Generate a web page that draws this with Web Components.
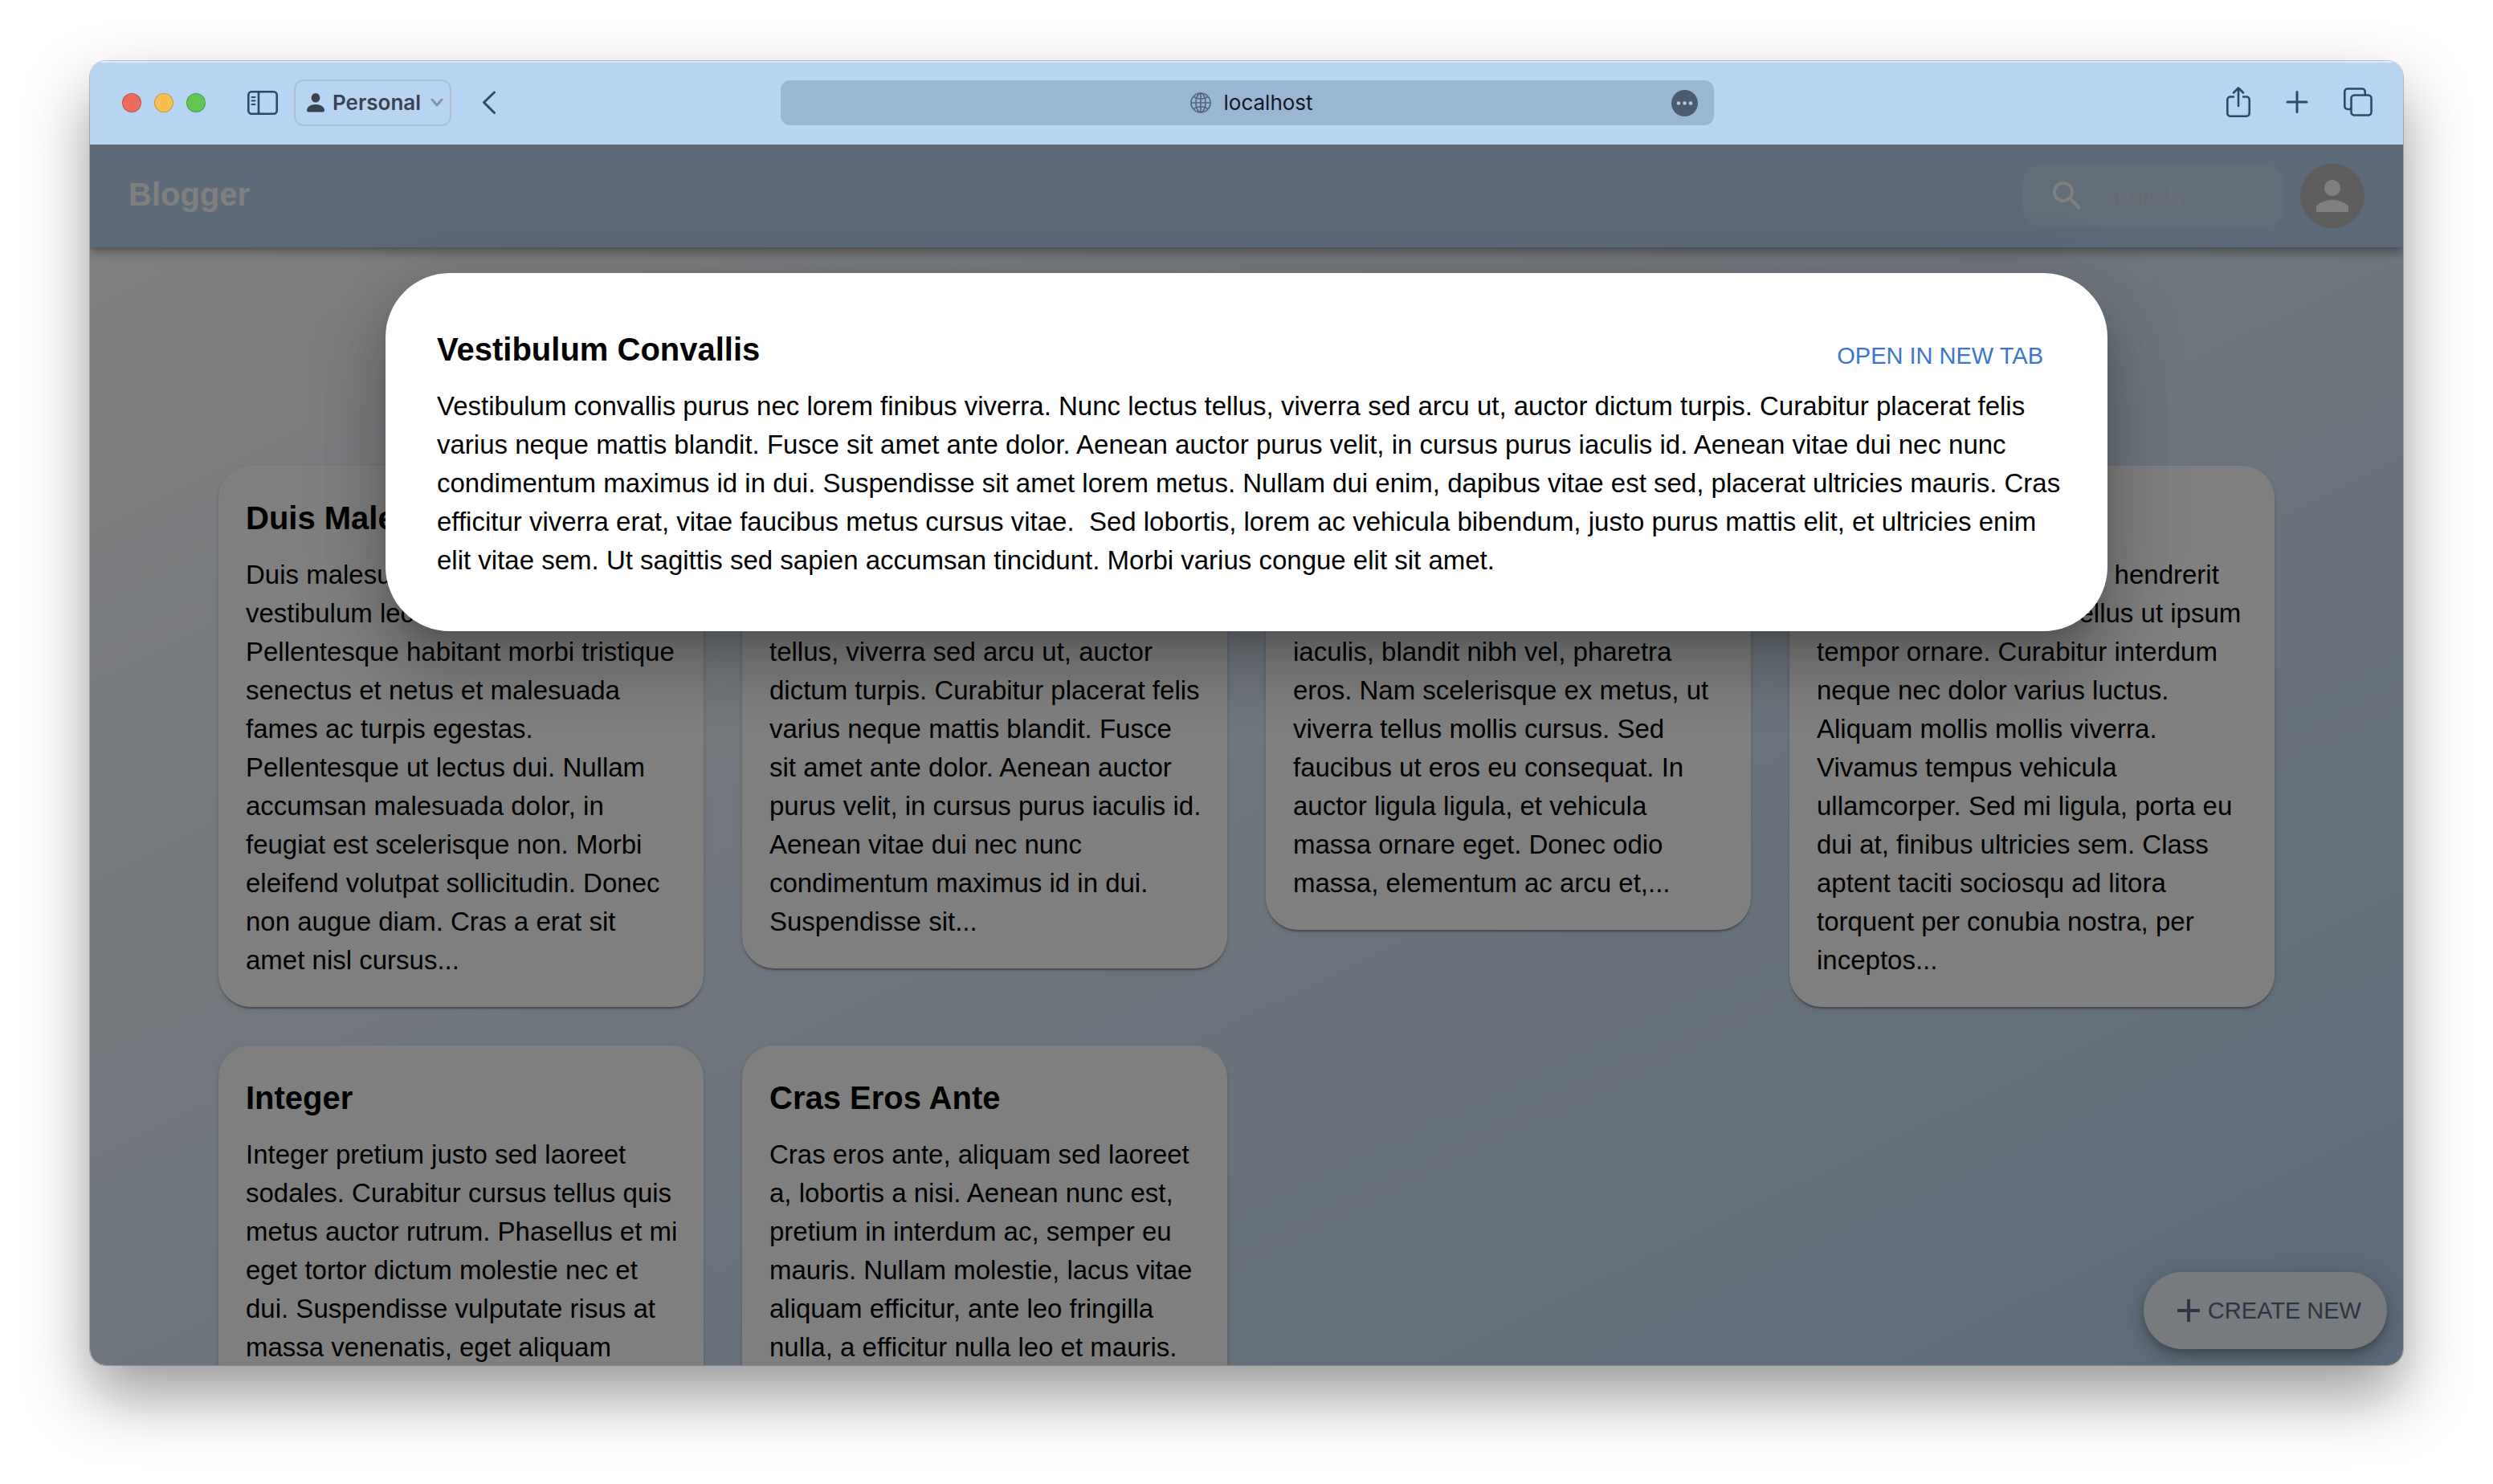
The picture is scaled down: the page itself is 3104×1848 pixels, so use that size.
<!DOCTYPE html>
<html lang="en">
<head>
<meta charset="utf-8">
<title>Blogger</title>
<style>
  body { margin: 0; background: #fff; font-family: "Liberation Sans", Arial, sans-serif; font-size: 33px; line-height: 48px; color: #000; }
</style>
</head>
<body>
<browser-window>
  <browser-toolbar slot="toolbar"></browser-toolbar>
  <blog-page>
    <blog-appbar slot="appbar"></blog-appbar>
    <post-card heading="Duis Malesuada">Duis malesuada lorem id tellus vestibulum lectus viverra sed. Pellentesque habitant morbi tristique senectus et netus et malesuada fames ac turpis egestas. Pellentesque ut lectus dui. Nullam accumsan malesuada dolor, in feugiat est scelerisque non. Morbi eleifend volutpat sollicitudin. Donec non augue diam. Cras a erat sit amet nisl cursus...</post-card>
    <post-card heading="Vestibulum Convallis">Vestibulum convallis purus nec lorem finibus viverra. Nunc lectus tellus, viverra sed arcu ut, auctor dictum turpis. Curabitur placerat felis varius neque mattis blandit. Fusce sit amet ante dolor. Aenean auctor purus velit, in cursus purus iaculis id. Aenean vitae dui nec nunc condimentum maximus id in dui. Suspendisse sit...</post-card>
    <post-card heading="Aenean Nec Felis">Aenean nec felis quis lorem ac vulputate porta. Nulla ut mauris iaculis, blandit nibh vel, pharetra eros. Nam scelerisque ex metus, ut viverra tellus mollis cursus. Sed faucibus ut eros eu consequat. In auctor ligula ligula, et vehicula massa ornare eget. Donec odio massa, elementum ac arcu et,...</post-card>
    <post-card heading="Suspendisse">Suspendisse posuere, in hendrerit viverra a sapien. Phasellus ut ipsum tempor ornare. Curabitur interdum neque nec dolor varius luctus. Aliquam mollis mollis viverra. Vivamus tempus vehicula ullamcorper. Sed mi ligula, porta eu dui at, finibus ultricies sem. Class aptent taciti sociosqu ad litora torquent per conubia nostra, per inceptos...</post-card>
    <post-card heading="Integer">Integer pretium justo sed laoreet sodales. Curabitur cursus tellus quis metus auctor rutrum. Phasellus et mi eget tortor dictum molestie nec et dui. Suspendisse vulputate risus at massa venenatis, eget aliquam</post-card>
    <post-card heading="Cras Eros Ante">Cras eros ante, aliquam sed laoreet a, lobortis a nisi. Aenean nunc est, pretium in interdum ac, semper eu mauris. Nullam molestie, lacus vitae aliquam efficitur, ante leo fringilla nulla, a efficitur nulla leo et mauris.</post-card>
    <create-button slot="fab">CREATE NEW</create-button>
    <post-dialog slot="dialog" heading="Vestibulum Convallis">Vestibulum convallis purus nec lorem finibus viverra. Nunc lectus tellus, viverra sed arcu ut, auctor dictum turpis. Curabitur placerat felis varius neque mattis blandit. Fusce sit amet ante dolor. Aenean auctor purus velit, in cursus purus iaculis id. Aenean vitae dui nec nunc condimentum maximus id in dui. Suspendisse sit amet lorem metus. Nullam dui enim, dapibus vitae est sed, placerat ultricies mauris. Cras efficitur viverra erat, vitae faucibus metus cursus vitae.&nbsp; Sed lobortis, lorem ac vehicula bibendum, justo purus mattis elit, et ultricies enim elit vitae sem. Ut sagittis sed sapien accumsan tincidunt. Morbi varius congue elit sit amet.</post-dialog>
  </blog-page>
</browser-window>

<script>
const define = (name, html) => customElements.define(name, class extends HTMLElement {
  connectedCallback() {
    if (this.shadowRoot) return;
    const t = document.createElement('template');
    t.innerHTML = '<style>*{box-sizing:border-box}button,input{font:inherit;color:inherit;border:0;padding:0;margin:0;background:none;outline:0}svg{display:block;flex:none}</style>' + html;
    this.attachShadow({ mode: 'open' }).append(t.content.cloneNode(true));
    const h = this.shadowRoot.querySelector('[data-heading]');
    if (h) h.textContent = this.getAttribute('heading');
  }
});

define('browser-window', `
<style>
  :host { display: block; box-sizing: border-box; height: 100vh; padding: 76px 112px 148px; overflow: hidden; }
  .frame { display: flex; flex-direction: column; height: 100%; border-radius: 20px; overflow: hidden;
    box-shadow: 0 0 0 1px rgba(0,0,0,.22), 0 38px 80px rgba(0,0,0,.4); }
  .view { flex: 1; min-height: 0; display: flex; flex-direction: column; }
</style>
<div class="frame"><slot name="toolbar"></slot><div class="view"><slot></slot></div></div>`);

define('browser-toolbar', `
<style>
  :host { display: grid; grid-template-columns: 1fr 1162px 1fr; align-items: center; height: 104px; flex: none; box-sizing: border-box;
    padding: 0 38px 0 40px; background: #b8d4f3; box-shadow: inset 0 2px 0 #dcebfb; color: #2b4a69;
    font-family: Inter, "Liberation Sans", sans-serif; font-size: 26px; line-height: 32px; }
  .left, .right, .lights { display: flex; align-items: center; }
  .lights { gap: 16px; margin-right: 52px; }
  .light { width: 24px; height: 24px; border-radius: 50%; border: 1px solid rgba(0,0,0,.2); }
  .profile { display: flex; align-items: center; height: 58px; width: 196px; padding: 0 8px 0 14px; margin: 0 38px 0 20px; border: 2px solid #b0bfd0; border-radius: 12px;
    color: #38434f; font-weight: 600; }
  .profile span { flex: 1; text-align: left; padding-left: 10px; }
  .address { display: flex; align-items: center; height: 56px; padding: 0 20px 0 64px; border-radius: 12px; background: #9ab6d5; }
  .place { flex: 1; display: flex; align-items: center; justify-content: center; gap: 16px; }
  .place input { width: 112px; height: 32px; color: #12181f; }
  .right { justify-content: flex-end; gap: 44px; }
  button { display: flex; }
</style>
<div class="left">
  <div class="lights">
    <button class="light" aria-label="Close" style="background:#ed6a5e"></button>
    <button class="light" aria-label="Minimise" style="background:#f5bf4f"></button>
    <button class="light" aria-label="Zoom" style="background:#61c554"></button>
  </div>
  <button aria-label="Sidebar"><svg width="38" height="30" viewBox="0 0 38 30" fill="none" stroke="currentColor" stroke-width="2.6"><rect x="1.3" y="1.3" width="35.4" height="27.4" rx="4"/><path d="M14 1v28"/><path d="M5.500 8h4M5.500 12.500h4M5.500 17h4" stroke-width="1.800" stroke-linecap="round"/></svg></button>
  <button class="profile"><svg width="22" height="24" viewBox="0 0 22 24" fill="currentColor"><ellipse cx="11" cy="5.800" rx="5.400" ry="5.800"/><path d="M0 21.500C0 17 5 14 11 14s11 3 11 7.500c0 1.200-.8 2-2 2H2c-1.200 0-2-.8-2-2z"/></svg><span>Personal</span><svg width="16" height="12" viewBox="0 0 16 12" fill="none" stroke="#8f9096" stroke-width="3" stroke-linecap="round" stroke-linejoin="round"><path d="M2 2l6 7 6-7"/></svg></button>
  <button aria-label="Back"><svg width="18" height="30" viewBox="0 0 18 30" fill="none" stroke="currentColor" stroke-width="3" stroke-linecap="round" stroke-linejoin="round"><path d="M15.500 2L2.500 14.500l13 13"/></svg></button>
</div>
<div class="address">
  <div class="place">
    <svg width="26" height="26" viewBox="0 0 26 26" fill="none" stroke="#52677e" stroke-width="1.700"><circle cx="13" cy="13" r="12"/><ellipse cx="13" cy="13" rx="6" ry="12"/><path d="M13 1v24M1 13h24M4 5.500c5 3.500 13 3.500 18 0M4 20.500c5-3.500 13-3.500 18 0"/></svg>
    <input type="text" aria-label="Address" value="localhost">
  </div>
  <button aria-label="Page menu"><svg width="33" height="33" viewBox="0 0 33 33"><circle cx="16.500" cy="16.500" r="16.500" fill="#4b5c6e"/><g fill="#b5cbe3"><circle cx="9" cy="16.500" r="2.300"/><circle cx="16.500" cy="16.500" r="2.300"/><circle cx="24" cy="16.500" r="2.300"/></g></svg></button>
</div>
<div class="right">
  <button aria-label="Share"><svg width="30" height="42" viewBox="0 0 30 42" fill="none" stroke="currentColor" stroke-width="2.600" stroke-linecap="round" stroke-linejoin="round"><path d="M10 13.500H5a3.700 3.700 0 0 0-3.700 3.700V34A3.700 3.700 0 0 0 5 37.700h20a3.700 3.700 0 0 0 3.700-3.700V17.200A3.700 3.700 0 0 0 25 13.500h-5" stroke-linecap="butt"/><path d="M15 25V3M9 8.500l6-6 6 6"/></svg></button>
  <button aria-label="New tab"><svg width="28" height="30" viewBox="0 0 28 30" fill="none" stroke="currentColor" stroke-width="3" stroke-linecap="round"><path d="M14 1.500v25M2 14h24"/></svg></button>
  <button aria-label="Show tabs"><svg width="36" height="38" viewBox="0 0 36 38" fill="none" stroke="currentColor" stroke-width="2.600"><rect x="9.500" y="9.500" width="25" height="25" rx="4"/><path d="M9.500 27H5a3.700 3.700 0 0 1-3.700-3.700V5.200A3.700 3.700 0 0 1 5 1.500h18A3.700 3.700 0 0 1 26.700 5.200v4"/></svg></button>
</div>`);

define('blog-page', `
<style>
  :host { position: relative; flex: 1; min-height: 0; display: flex; flex-direction: column; overflow: hidden; background: #fff; }
  main { flex: 1; min-height: 0; overflow: hidden; padding: 272px 160px 0; background: linear-gradient(to bottom right, #fff, #b9d5f4); }
  .grid { display: grid; grid-template-columns: repeat(4, minmax(0, 1fr)); gap: 48px; align-items: start; }
</style>
<slot name="appbar"></slot>
<main><div class="grid"><slot></slot></div></main>
<slot name="fab"></slot>
<slot name="dialog"></slot>`);

define('blog-appbar', `
<style>
  :host { position: relative; display: flex; align-items: center; justify-content: space-between; flex: none; box-sizing: border-box; height: 128px; padding: 0 48px;
    background: #bad4f4; color: #fff; font-size: 32px;
    box-shadow: 0 4px 8px -2px rgba(0,0,0,.2), 0 8px 10px rgba(0,0,0,.14), 0 2px 20px rgba(0,0,0,.12); }
  h1 { margin: 0; padding-bottom: 4px; font-size: 40px; line-height: 62px; }
  .tools { display: flex; align-items: center; gap: 20px; }
  .search { display: flex; align-items: center; gap: 16px; width: 326px; height: 78px; padding: 0 20px 0 32px; border-radius: 24px; background: #c2daf2; }
  input { flex: 1; min-width: 0; height: 48px; }
  input::placeholder { color: #dadde8; opacity: 1; }
  .avatar { display: flex; align-items: center; justify-content: center; width: 80px; height: 80px; border-radius: 50%; background: #bdbdbd; }
</style>
<h1>Blogger</h1>
<div class="tools">
  <label class="search"><svg width="48" height="48" viewBox="0 0 24 24" fill="currentColor"><path d="M15.500 14h-.79l-.28-.27C15.410 12.590 16 11.110 16 9.500 16 5.910 13.090 3 9.500 3S3 5.910 3 9.500 5.910 16 9.500 16c1.610 0 3.090-.59 4.230-1.570l.27.28v.79l5 4.990L20.490 19l-4.990-5zm-6 0C7.010 14 5 11.990 5 9.500S7.010 5 9.500 5 14 7.010 14 9.500 11.990 14 9.500 14z"/></svg><input type="text" aria-label="Search" placeholder="Search…"></label>
  <button class="avatar" aria-label="Account"><svg width="60" height="60" viewBox="0 0 24 24" fill="#fff"><path d="M12 12c2.210 0 4-1.790 4-4s-1.790-4-4-4-4 1.790-4 4 1.790 4 4 4zm0 2c-2.670 0-8 1.340-8 4v2h16v-2c0-2.660-5.330-4-8-4z"/></svg></button>
</div>`);

define('post-card', `
<style>
  :host { display: block; box-sizing: border-box; padding: 34px 28px 34px 34px; border-radius: 40px; background: #fff;
    box-shadow: 0 4px 2px -2px rgba(0,0,0,.2), 0 2px 2px rgba(0,0,0,.14), 0 2px 6px rgba(0,0,0,.12); }
  h2 { margin: 0 0 16px; font-size: 40px; line-height: 62px; }
  p { margin: 0; }
</style>
<article><h2 data-heading></h2><p><slot></slot></p></article>`);

define('create-button', `
<style>
  :host { position: absolute; right: 20px; bottom: 20px; }
  button { display: flex; align-items: center; height: 96px; padding: 0 32px; border-radius: 48px; background: #eef6fc; color: #546c8c; font-size: 29px;
    box-shadow: 0 6px 10px -2px rgba(0,0,0,.2), 0 12px 20px rgba(0,0,0,.14), 0 2px 36px rgba(0,0,0,.12); }
</style>
<button><svg width="48" height="48" viewBox="0 0 24 24" fill="currentColor"><path d="M19 13h-6v6h-2v-6H5v-2h6V5h2v6h6v2z"/></svg><slot></slot></button>`);

define('post-dialog', `
<style>
  :host { position: absolute; inset: 0; display: flex; flex-direction: column; padding: 160px 368px 0; background: rgba(0,0,0,.5); }
  section { padding: 64px 48px 64px 64px; border-radius: 80px; background: #fff;
    box-shadow: 0 22px 30px -14px rgba(0,0,0,.2), 0 48px 76px 6px rgba(0,0,0,.14), 0 18px 92px 16px rgba(0,0,0,.12); }
  header { display: flex; align-items: center; justify-content: space-between; height: 78px; padding-right: 32px; }
  h2 { margin: 0 0 16px; font-size: 40px; line-height: 62px; }
  a { color: #3a75d0; font-size: 29px; text-decoration: none; }
  p { margin: 0; }
</style>
<section role="dialog" aria-labelledby="title">
  <header><h2 id="title" data-heading></h2><a href="#post">OPEN IN NEW TAB</a></header>
  <p><slot></slot></p>
</section>`);
</script>
</body>
</html>
